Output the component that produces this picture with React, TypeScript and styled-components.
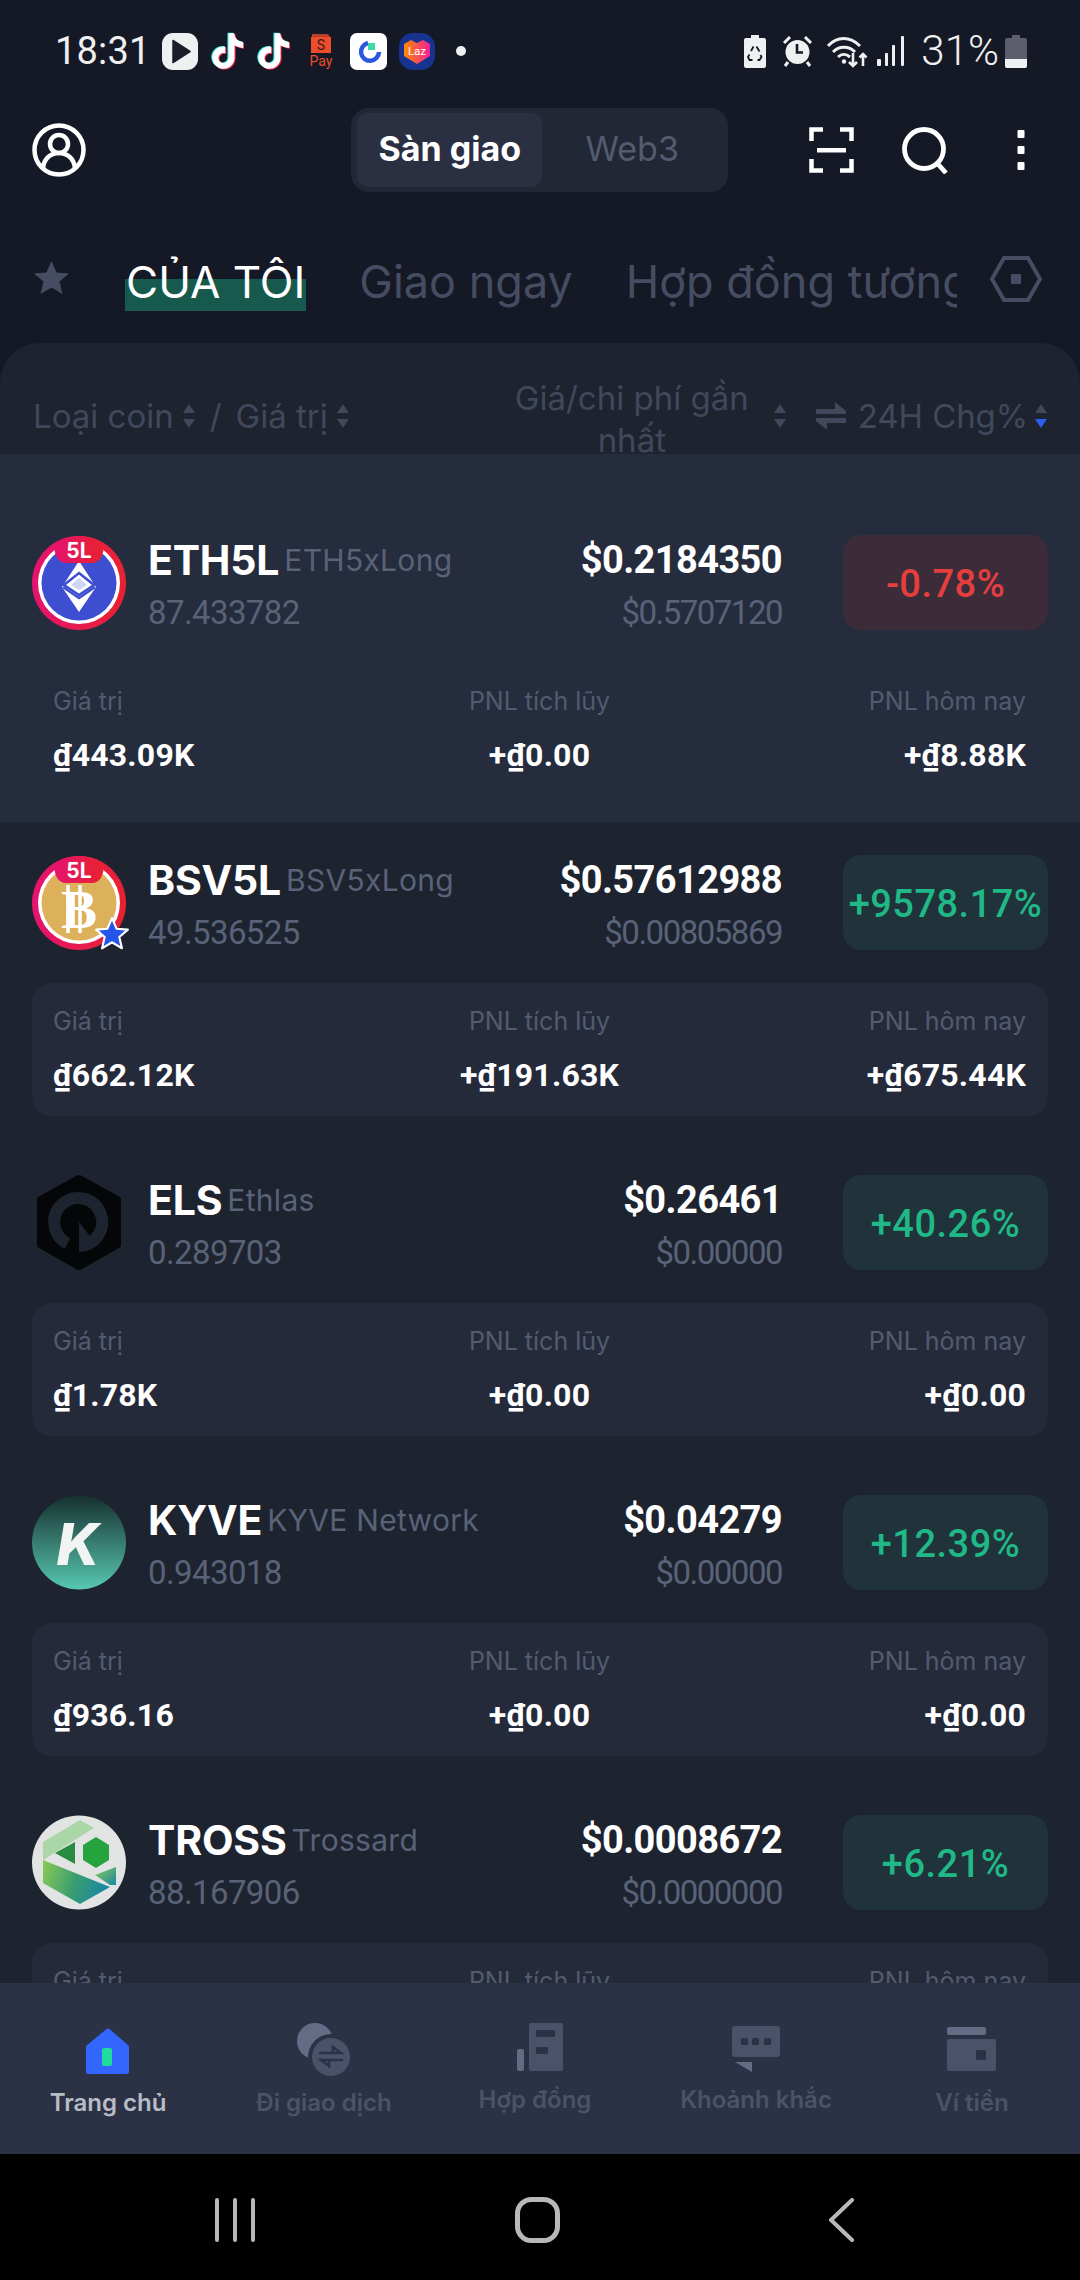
import React from 'react';
import styled, { createGlobalStyle } from 'styled-components';

const Global = createGlobalStyle`
  html, body { margin: 0; padding: 0; background: #151925; }
  * { box-sizing: border-box; }
`;

const Page = styled.div`
  width: 1080px; height: 2280px; display: flex; flex-direction: column; overflow: hidden;
  background: #151925; font-family: Inter, "Noto Sans", sans-serif; color: #fff;
`;
const StatusBar = styled.div`
  height: 100px; flex: none; display: flex; align-items: center; justify-content: space-between;
  padding: 2px 53px 0 55px;
`;
const StatusGroup = styled.div<{ $gap: number }>`display: flex; align-items: center; gap: ${p => p.$gap}px;`;
const Clock = styled.span`
  font: 400 38px/1 Roboto, sans-serif; color: #eef0f2; width: 95px; letter-spacing: .2px;
`;
const Battery = styled.span`
  font: 300 42px/1 Roboto, sans-serif; color: #eef0f2; margin-left: 16px; margin-right: 6px;
`;
const Sys = styled.svg<{ $left?: number }>`display: block; flex: none; margin-left: ${p => p.$left ?? 0}px;`;

const Header = styled.header`
  height: 100px; flex: none; display: grid; grid-template-columns: 319px 377px 1fr; align-items: center; padding-left: 32px;
`;
const Segment = styled.div`
  height: 84px; border-radius: 18px; background: #222736; padding: 5px 6px; display: flex; align-items: stretch;
`;
const SegItem = styled.div<{ $on?: boolean }>`
  width: ${p => (p.$on ? 188 : 182)}px; display: flex; align-items: center; justify-content: center; border-radius: 10px;
  background: ${p => (p.$on ? '#2a2f42' : 'transparent')};
  font-size: 34px; font-weight: ${p => (p.$on ? 700 : 400)}; color: ${p => (p.$on ? '#fff' : '#545b70')};
  padding-bottom: 4px;
`;
const HeaderIcons = styled.div`display: flex; align-items: center; gap: 48px; margin-left: 81px;`;

const TabsRow = styled.nav`
  height: 143px; flex: none; display: flex; align-items: flex-start; padding: 53px 0 0 34px;
`;
const TabClip = styled.div`
  width: 832px; margin-left: 56px; display: flex; gap: 53px; overflow: hidden; white-space: nowrap;
`;
const Tab = styled.span<{ $on?: boolean }>`
  height: 58px; font-size: ${p => (p.$on ? 44 : 45)}px; line-height: 58px; padding: 0 ${p => (p.$on ? 1 : 0)}px; flex: none;
  color: ${p => (p.$on ? '#fff' : '#464d62')};
  background: ${p => (p.$on ? 'linear-gradient(to bottom, transparent 26px, #17594d 26px)' : 'none')};
`;
const HexWrap = styled.div`margin-left: 33px; margin-top: 3px;`;

const Panel = styled.main`
  flex: 1; min-height: 0; overflow: hidden; background: #1e2330; border-radius: 40px 40px 0 0;
`;
const TableHead = styled.div`
  height: 111px; display: flex; align-items: center; padding: 34px 32px 0 33px; overflow: hidden;
  font-size: 33px; color: #41485b;
`;
const HeadGroup = styled.div<{ $auto?: boolean; $gap: number; $end?: number }>`
  display: flex; align-items: center; gap: ${p => p.$gap}px; white-space: nowrap;
  margin-left: ${p => (p.$auto ? 'auto' : 0)}; margin-right: ${p => p.$end ?? 0}px;
`;
const Slash = styled.span`margin: 0 6px;`;
const ChangeHead = styled.span`margin-right: -6px; letter-spacing: -.1px;`;
const TwoLine = styled.div`
  width: 240px; text-align: center; line-height: 42px; white-space: normal; margin-top: 6px; margin-right: 12px;
`;
const Row = styled.section<{ $hi?: boolean }>`
  padding: ${p => (p.$hi ? 81 : 33)}px 32px 26px;
  background: ${p => (p.$hi ? '#252c3d' : 'transparent')};
`;
const RowMain = styled.div`display: flex; align-items: flex-start; height: 95px;`;
const Logo = styled.div`position: relative; width: 94px; height: 95px; flex: none; margin-right: 22px;`;
const Coin = styled.div`flex: 1; min-width: 0;`;
const NameLine = styled.div`display: flex; align-items: center; gap: 5px; height: 50px; line-height: 50px; white-space: nowrap;`;
const Symbol = styled.span`font-size: 41px; font-weight: 700; color: #fff; letter-spacing: -.2px;`;
const FullName = styled.span`font-size: 30px; color: #596277; letter-spacing: .3px;`;
const Amount = styled.div`font: 400 33px/44px Roboto, sans-serif; color: #596277; margin-top: 6px; letter-spacing: -.6px;`;
const Prices = styled.div`text-align: right; width: 300px; flex: none;`;
const Price = styled.div`font: 700 38px/50px Roboto, sans-serif; color: #fff; letter-spacing: -.6px;`;
const Cost = styled.div`font: 400 33px/44px Roboto, sans-serif; color: #596277; margin-top: 6px; letter-spacing: -1.5px;`;
const Change = styled.div<{ $up: boolean }>`
  width: 205px; height: 95px; flex: none; margin-left: 61px; border-radius: 18px; display: flex; align-items: center; justify-content: center;
  font: 500 38px/1 Roboto, sans-serif; letter-spacing: .5px; padding-top: 2px;
  color: ${p => (p.$up ? '#1fb886' : '#e53e3e')};
  background: ${p => (p.$up ? '#20323a' : '#3c2c3a')};
`;
const Stats = styled.div<{ $plain?: boolean }>`
  margin-top: 33px; height: 133px; border-radius: 20px; background: ${p => (p.$plain ? 'transparent' : '#252a3b')}; padding: 20px 22px 0 21px;
  display: grid; grid-template-columns: 1fr 1fr 1fr;
`;
const Stat = styled.div<{ $align: string }>`text-align: ${p => p.$align};`;
const StatLabel = styled.div`font-size: 25px; line-height: 36px; color: #535b70;`;
const StatValue = styled.div`font: 700 32px/40px Roboto, sans-serif; color: #fff; margin-top: 16px; letter-spacing: .2px;`;

const TabBar = styled.nav`
  height: 171px; flex: none; background: #2b3245; padding-top: 40px; display: grid; grid-template-columns: repeat(5, 1fr);
`;
const TabItem = styled.div`display: flex; flex-direction: column; align-items: center;`;
const TabLabel = styled.span<{ $on?: boolean; $lift?: boolean; $nudge?: number }>`
  font-size: 24px; line-height: 32px; font-weight: 600; white-space: nowrap;
  color: ${p => (p.$on ? '#b9bdc7' : '#4b5369')};
  margin-top: ${p => (p.$lift ? 5 : 8)}px;
  margin-right: ${p => p.$nudge ?? 0}px;
`;
const SystemNav = styled.div`
  height: 126px; flex: none; background: #000; display: grid; grid-template-columns: 300px 313px 1fr; align-items: center;
  padding: 5px 0 0 215px;
`;

const Caret = ({ down }: { down?: boolean }) => (
  <svg width="14" height="30" viewBox="0 0 14 30" style={{ display: 'block', flex: 'none' }}>
    <path d="M7 3l6 9H1z" fill="#41485b" />
    <path d="M7 27l6-9H1z" fill={down ? '#2b5ff0' : '#41485b'} />
  </svg>
);

const TIKTOK = 'M12.525.02c1.31-.02 2.61-.01 3.91-.02.08 1.53.63 3.09 1.75 4.17 1.12 1.11 2.7 1.62 4.24 1.79v4.03c-1.44-.05-2.89-.35-4.2-.97-.57-.26-1.1-.59-1.62-.93-.01 2.92.01 5.84-.02 8.75-.08 1.4-.54 2.79-1.35 3.94-1.31 1.92-3.58 3.17-5.91 3.21-1.43.08-2.86-.31-4.08-1.03-2.02-1.19-3.44-3.37-3.65-5.71-.02-.5-.03-1-.01-1.49.18-1.9 1.12-3.72 2.58-4.96 1.66-1.44 3.98-2.13 6.15-1.72.02 1.48-.04 2.96-.04 4.44-.99-.32-2.15-.23-3.02.37-.63.41-1.11 1.04-1.36 1.75-.21.51-.15 1.07-.14 1.61.24 1.64 1.82 3.02 3.5 2.87 1.12-.01 2.19-.66 2.77-1.61.19-.33.4-.67.41-1.06.1-1.79.06-3.57.07-5.36.01-4.03-.01-8.05.02-12.07z';
const TikTok = () => (
  <Sys width="34" height="38" viewBox="0 -.5 23 25">
    <path d={TIKTOK} fill="#25f4ee" transform="translate(-.7 -.4)" />
    <path d={TIKTOK} fill="#fe2c55" transform="translate(.7 .5)" />
    <path d={TIKTOK} fill="#fff" />
  </Sys>
);

const StatusLeft = () => (
  <StatusGroup $gap={12}>
    <Clock>18:31</Clock>
    <Sys width="36" height="37" viewBox="0 0 36 37">
      <rect width="36" height="37" rx="11" fill="#eef0f2" />
      <path d="M11 7.500 28 18.500 11 29.500z" fill="#1a1d2a" stroke="#1a1d2a" strokeWidth="1.500" strokeLinejoin="round" />
    </Sys>
    <TikTok />
    <TikTok />
    <Sys width="36" height="36" viewBox="0 0 36 36">
      <path d="M10 1h16l2 3H10z" fill="#ee4d2d" opacity=".75" />
      <rect x="9" y="4" width="20" height="16" fill="#ee4d2d" />
      <text x="19" y="17" textAnchor="middle" fontFamily="Roboto, sans-serif" fontSize="14" fill="#3b1a16">S</text>
      <text x="19" y="33" textAnchor="middle" fontFamily="Roboto, sans-serif" fontSize="14" fill="#ee4d2d">Pay</text>
    </Sys>
    <Sys width="37" height="37" viewBox="0 0 37 37">
      <rect width="37" height="37" rx="7" fill="#fff" />
      <path d="M18 10a9 9 0 1 0 11 9" fill="none" stroke="#2a56e0" strokeWidth="4.500" />
      <rect x="18" y="10" width="7" height="7" fill="#3ed9a8" />
    </Sys>
    <Sys width="36" height="37" viewBox="0 0 36 37">
      <defs>
        <linearGradient id="lazg" x1="0" y1="0" x2="1" y2="0">
          <stop offset="0" stopColor="#ff8a00" />
          <stop offset="1" stopColor="#f0209a" />
        </linearGradient>
      </defs>
      <rect width="36" height="37" rx="14" fill="#16338f" />
      <path d="M5 11l7-4 6 3 6-3 7 4v12L18 31 5 23z" fill="url(#lazg)" />
      <text x="18" y="22" textAnchor="middle" fontFamily="Roboto, sans-serif" fontSize="11.500" fill="#fff">Laz</text>
    </Sys>
    <Sys width="28" height="10" viewBox="0 0 28 10"><circle cx="14" cy="5" r="5" fill="#eef0f2" /></Sys>
  </StatusGroup>
);

const StatusRight = () => (
  <StatusGroup $gap={0}>
    <Sys width="22" height="33" viewBox="0 0 22 33">
      <path d="M7 0h8v3h5a2 2 0 0 1 2 2v26a2 2 0 0 1-2 2H2a2 2 0 0 1-2-2V5a2 2 0 0 1 2-2h5z" fill="#eef0f2" />
      <path d="M9.500 11.500 7 16M12.500 11.500 15.500 16.500M16.500 20l1 2-2 3h-2M8.500 25H5.500l-1.500-3 1.500-2.500" stroke="#151925" strokeWidth="1.800" fill="none" />
    </Sys>
    <Sys $left={16} width="31" height="32" viewBox="0 0 31 32">
      <circle cx="15.500" cy="17" r="12" fill="#eef0f2" />
      <path d="M15 9v8.500h6" stroke="#151925" strokeWidth="2.600" fill="none" />
      <path d="M2 8l6-6M29 8l-6-6M6 27l-3 4M25 27l3 4" stroke="#eef0f2" strokeWidth="3" />
    </Sys>
    <Sys $left={14} width="41" height="33" viewBox="0 0 41 33">
      <path d="M1 11C10 1 23 1 33 11M6 17c6-6.500 16-6.500 22 0M11 22c3.500-3.500 8-3.500 12 0" stroke="#eef0f2" strokeWidth="3" fill="none" />
      <circle cx="17" cy="26.500" r="2.200" fill="#eef0f2" />
      <path d="M26 18v13M22 27l4 4 4-4M36 31V19M32.500 22.500l3.500-3.500 3.500 3.500" stroke="#eef0f2" strokeWidth="2.600" fill="none" />
    </Sys>
    <Sys $left={9} width="28" height="30" viewBox="0 0 28 30">
      <rect x="0" y="23" width="4" height="7" rx="1" fill="#eef0f2" />
      <rect x="8" y="17" width="3" height="13" rx="1" fill="#eef0f2" />
      <rect x="15" y="9" width="3" height="21" rx="1" fill="#eef0f2" />
      <rect x="24" y="0" width="3" height="30" rx="1" fill="#eef0f2" />
    </Sys>
    <Battery>31%</Battery>
    <Sys width="22" height="33" viewBox="0 0 22 33">
      <path d="M7 0h8v3h5a2 2 0 0 1 2 2v26a2 2 0 0 1-2 2H2a2 2 0 0 1-2-2V5a2 2 0 0 1 2-2h5z" fill="#5c5f6b" />
      <path d="M0 24h22v7a2 2 0 0 1-2 2H2a2 2 0 0 1-2-2z" fill="#eef0f2" />
    </Sys>
  </StatusGroup>
);

const RedRing = ({ id, fill, children }: { id: string; fill: string; children: React.ReactNode }) => (
  <svg width="94" height="95" viewBox="0 0 94 95" style={{ display: 'block' }}>
    <defs>
      <linearGradient id={id} x1="0" y1="0" x2="1" y2="0">
        <stop offset="0" stopColor="#e5136f" />
        <stop offset="1" stopColor="#e8222f" />
      </linearGradient>
    </defs>
    <circle cx="47" cy="48" r="47" fill={`url(#${id})`} />
    <circle cx="47" cy="48" r="41" fill="#fff" />
    <circle cx="47" cy="48" r="37.500" fill={fill} />
    {children}
    <path d="M22 9C30 3 38 1 47 1s17 2 25 8c0 11-4 19-12 19H34C26 28 22 20 22 9z" fill={`url(#${id})`} />
    <text x="47" y="23" textAnchor="middle" fontFamily="Inter, sans-serif" fontWeight="700" fontSize="21" fill="#fff">5L</text>
  </svg>
);

const EthLogo = () => (
  <RedRing id="ethring" fill="#3d4fd0">
    <path d="M47 26 64 52 47 77 30 52z" fill="#fff" />
    <path d="M31 52 47 63 63 52" fill="none" stroke="#3d4fd0" strokeWidth="2.500" />
    <path d="M47 38 62 50 47 60 32 50z" fill="#fff" stroke="#3d4fd0" strokeWidth="2.500" />
    <path d="M47 43 55 50 47 55 39 50z" fill="#cfd5f5" />
  </RedRing>
);
const BsvLogo = () => (
  <RedRing id="bsvring" fill="#ddb05c">
    <path d="M36 30v48M48 30v48" stroke="#fff" strokeWidth="3.500" />
    <text x="47" y="73" textAnchor="middle" fontFamily="Liberation Serif, serif" fontWeight="700" fontSize="54" fill="#fff">B</text>
  </RedRing>
);
const StarBadge = styled.svg`position: absolute; left: 62px; top: 61px; display: block;`;
const ElsLogo = () => (
  <svg width="94" height="95" viewBox="0 0 94 95" style={{ display: 'block' }}>
    <path d="M47 0a4 4 0 0 1 2 .5L87 21.500a3 3 0 0 1 2 3V70a3 3 0 0 1-2 3L49 94.500a4 4 0 0 1-4 0L7 73a3 3 0 0 1-2-3V24.500a3 3 0 0 1 2-3L45 .5a4 4 0 0 1 2-.5z" fill="#050608" />
    <path d="M35.500 68.500A24 24 0 1 1 47 71" fill="none" stroke="#1e2330" strokeWidth="12" />
    <path d="M47 77V47L60 64 53 76z" fill="#1e2330" />
  </svg>
);
const KyveLogo = () => (
  <svg width="94" height="95" viewBox="0 0 94 95" style={{ display: 'block' }}>
    <defs>
      <linearGradient id="kyveg" x1="0" y1="0" x2="0" y2="1">
        <stop offset="0" stopColor="#16302f" />
        <stop offset="1" stopColor="#58c8b0" />
      </linearGradient>
    </defs>
    <circle cx="47" cy="47.500" r="47" fill="url(#kyveg)" />
    <text x="46" y="70" textAnchor="middle" fontFamily="Inter, sans-serif" fontWeight="800" fontStyle="italic" fontSize="58" fill="#f2f4f3">K</text>
  </svg>
);
const TrossLogo = () => (
  <svg width="94" height="95" viewBox="0 0 94 95" style={{ display: 'block' }}>
    <defs>
      <linearGradient id="trossg" x1="0" y1="0" x2="1" y2=".2">
        <stop offset="0" stopColor="#8ccb56" />
        <stop offset=".55" stopColor="#3a9d6f" />
        <stop offset="1" stopColor="#1a88a0" />
      </linearGradient>
      <linearGradient id="trossb" x1="0" y1="0" x2="1" y2="1">
        <stop offset="0" stopColor="#8ccb56" />
        <stop offset="1" stopColor="#1a88a0" />
      </linearGradient>
    </defs>
    <circle cx="47" cy="47.500" r="47" fill="#e2e4e4" />
    <path d="M48 5 62 13 11 45V27z" fill="#abd6a8" />
    <path d="M43 27V49L23 38z" fill="#2b8a41" />
    <path d="M11 45 78 72 48 89 11 68z" fill="url(#trossg)" />
    <path d="M84 52V70H78L63 60z" fill="url(#trossb)" />
    <path d="M64 22 77 30V45L64 53 51 45V30z" fill="#25a33f" />
  </svg>
);

const NavSvg = styled.svg`display: block;`;
const HomeIcon = () => (
  <NavSvg width="46" height="56" viewBox="0 0 46 56">
    <path d="M21 6.500a3 3 0 0 1 4 0L44 23v26a2 2 0 0 1-2 2H3a2 2 0 0 1-2-2V23z" fill="#3366ff" />
    <rect x="17" y="25" width="10" height="18" rx="2" fill="#1fdc9c" />
  </NavSvg>
);
const TradeIcon = () => (
  <NavSvg width="54" height="56" viewBox="0 0 54 56">
    <circle cx="18" cy="18" r="18" fill="#646c85" />
    <circle cx="34" cy="34" r="23" fill="#2b3245" />
    <circle cx="34" cy="34" r="19" fill="#4a526a" />
    <path d="M22 30h22l-8-6v6M46 37H24l8 6v-6" stroke="#2b3245" strokeWidth="2.500" fill="none" />
  </NavSvg>
);
const ContractIcon = () => (
  <NavSvg width="46" height="56" viewBox="0 0 46 56">
    <rect x="12" width="34" height="48" rx="2" fill="#4a526a" />
    <rect y="26" width="7" height="22" rx="2" fill="#646c85" />
    <rect x="19" y="7" width="19" height="7" rx="1.500" fill="#2b3245" />
    <rect x="19" y="24" width="12" height="7" rx="1.500" fill="#2b3245" />
  </NavSvg>
);
const MomentIcon = () => (
  <NavSvg width="48" height="56" viewBox="0 0 48 56">
    <rect y="3" width="48" height="31" rx="3" fill="#4a526a" />
    <rect x="9" y="15" width="7" height="7" rx="1.500" fill="#2b3245" />
    <rect x="20" y="15" width="7" height="7" rx="1.500" fill="#2b3245" />
    <rect x="32" y="15" width="7" height="7" rx="1.500" fill="#2b3245" />
    <path d="M3 39H20V49z" fill="#646c85" />
  </NavSvg>
);
const WalletIcon = () => (
  <NavSvg width="50" height="56" viewBox="0 0 50 56">
    <rect y="4" width="39" height="8" rx="2" fill="#646c85" />
    <rect y="16" width="49" height="32" rx="2" fill="#4a526a" />
    <rect x="29" y="27" width="10" height="10" rx="1.500" fill="#2b3245" />
  </NavSvg>
);

type CoinRow = {
  sym: string; full: string; amount: string; price: string; cost: string; change: string; up: boolean;
  logo: React.ReactNode; star?: boolean; stats: [string, string, string];
};
const coins: CoinRow[] = [
  { sym: 'ETH5L', full: 'ETH5xLong', amount: '87.433782', price: '$0.2184350', cost: '$0.5707120', change: '-0.78%', up: false, logo: <EthLogo />, stats: ['₫443.09K', '+₫0.00', '+₫8.88K'] },
  { sym: 'BSV5L', full: 'BSV5xLong', amount: '49.536525', price: '$0.57612988', cost: '$0.00805869', change: '+9578.17%', up: true, logo: <BsvLogo />, star: true, stats: ['₫662.12K', '+₫191.63K', '+₫675.44K'] },
  { sym: 'ELS', full: 'Ethlas', amount: '0.289703', price: '$0.26461', cost: '$0.00000', change: '+40.26%', up: true, logo: <ElsLogo />, stats: ['₫1.78K', '+₫0.00', '+₫0.00'] },
  { sym: 'KYVE', full: 'KYVE Network', amount: '0.943018', price: '$0.04279', cost: '$0.00000', change: '+12.39%', up: true, logo: <KyveLogo />, stats: ['₫936.16', '+₫0.00', '+₫0.00'] },
  { sym: 'TROSS', full: 'Trossard', amount: '88.167906', price: '$0.0008672', cost: '$0.0000000', change: '+6.21%', up: true, logo: <TrossLogo />, stats: ['', '', ''] },
];

export default function App() {
  return (
    <Page>
      <Global />
      <StatusBar>
        <StatusLeft />
        <StatusRight />
      </StatusBar>
      <Header>
        <svg width="54" height="54" viewBox="0 0 54 54" style={{ display: 'block' }}>
          <circle cx="27" cy="27" r="24.500" fill="none" stroke="#fff" strokeWidth="4.500" />
          <circle cx="27" cy="21" r="9" fill="none" stroke="#fff" strokeWidth="4.500" />
          <path d="M11 45c1-9 7-15 16-15s15 6 16 15" fill="none" stroke="#fff" strokeWidth="4.500" />
        </svg>
        <Segment>
          <SegItem $on>Sàn giao</SegItem>
          <SegItem>Web3</SegItem>
        </Segment>
        <HeaderIcons>
          <svg width="45" height="46" viewBox="0 0 45 46" style={{ display: 'block' }}>
            <path d="M14 2.500H2.500V14M31 2.500h11.500V14M14 43.500H2.500V32M31 43.500h11.500V32" fill="none" stroke="#fff" strokeWidth="4.500" />
            <rect x="8" y="21" width="29" height="4.500" fill="#fff" />
          </svg>
          <svg width="48" height="47" viewBox="0 0 48 47" style={{ display: 'block' }}>
            <circle cx="22" cy="22" r="19.500" fill="none" stroke="#fff" strokeWidth="4.800" />
            <path d="M35 36l9 10" stroke="#fff" strokeWidth="4.800" />
          </svg>
          <svg width="46" height="40" viewBox="0 0 46 40" style={{ display: 'block' }}>
            <rect x="19.500" y="0" width="7" height="8" rx="1" fill="#fff" />
            <rect x="19.500" y="16" width="7" height="8" rx="1" fill="#fff" />
            <rect x="19.500" y="32" width="7" height="8" rx="1" fill="#fff" />
          </svg>
        </HeaderIcons>
      </Header>
      <TabsRow>
        <svg width="35" height="33" viewBox="0 0 35 33" style={{ display: 'block', flex: 'none', marginTop: 8 }}>
          <path d="M17.500 0l5 11.500 12.500 1-9.500 8 3 12.500-11-6.600L6.500 33l3-12.500-9.500-8 12.500-1z" fill="#464d62" />
        </svg>
        <TabClip>
          <Tab $on>CỦA TÔI</Tab>
          <Tab>Giao ngay</Tab>
          <Tab>Hợp đồng tương lai</Tab>
        </TabClip>
        <HexWrap>
          <svg width="52" height="46" viewBox="0 0 52 46" style={{ display: 'block' }}>
            <path d="M14 2h24l12 21-12 21H14L2 23z" fill="none" stroke="#464d62" strokeWidth="4" />
            <rect x="21" y="18" width="10" height="10" fill="#464d62" />
          </svg>
        </HexWrap>
      </TabsRow>
      <Panel>
        <TableHead>
          <HeadGroup $gap={8}>
            <span>Loại coin</span><Caret />
            <Slash>/</Slash>
            <span>Giá trị</span><Caret />
          </HeadGroup>
          <HeadGroup $auto $gap={9} $end={29}>
            <TwoLine>Giá/chi phí gần nhất</TwoLine>
            <Caret />
          </HeadGroup>
          <HeadGroup $gap={12}>
            <svg width="30" height="32" viewBox="0 0 30 32" style={{ display: 'block' }}>
              <path d="M0 9h19V2l11 9v3H0zM30 23H11v7L0 21v-3h30z" fill="#41485b" />
            </svg>
            <ChangeHead>24H Chg%</ChangeHead>
            <Caret down />
          </HeadGroup>
        </TableHead>
        {coins.map((c, i) => (
          <Row key={c.sym} $hi={i === 0}>
            <RowMain>
              <Logo>
                {c.logo}
                {c.star && (
                  <StarBadge width="36" height="36" viewBox="0 0 34 34">
                    <path d="M17 2l4.300 10 10.700.9-8.100 7 2.500 10.600L17 24.800 7.600 30.500l2.500-10.600-8.100-7 10.700-.9z" fill="#2356e6" stroke="#fff" strokeWidth="2" strokeLinejoin="round" />
                  </StarBadge>
                )}
              </Logo>
              <Coin>
                <NameLine>
                  <Symbol>{c.sym}</Symbol>
                  <FullName>{c.full}</FullName>
                </NameLine>
                <Amount>{c.amount}</Amount>
              </Coin>
              <Prices>
                <Price>{c.price}</Price>
                <Cost>{c.cost}</Cost>
              </Prices>
              <Change $up={c.up}>{c.change}</Change>
            </RowMain>
            <Stats $plain={i === 0}>
              <Stat $align="left">
                <StatLabel>Giá trị</StatLabel>
                <StatValue>{c.stats[0]}</StatValue>
              </Stat>
              <Stat $align="center">
                <StatLabel>PNL tích lũy</StatLabel>
                <StatValue>{c.stats[1]}</StatValue>
              </Stat>
              <Stat $align="right">
                <StatLabel>PNL hôm nay</StatLabel>
                <StatValue>{c.stats[2]}</StatValue>
              </Stat>
            </Stats>
          </Row>
        ))}
      </Panel>
      <TabBar>
        <TabItem><HomeIcon /><TabLabel $on>Trang chủ</TabLabel></TabItem>
        <TabItem><TradeIcon /><TabLabel>Đi giao dịch</TabLabel></TabItem>
        <TabItem><ContractIcon /><TabLabel $lift $nudge={10}>Hợp đồng</TabLabel></TabItem>
        <TabItem><MomentIcon /><TabLabel $lift>Khoảnh khắc</TabLabel></TabItem>
        <TabItem><WalletIcon /><TabLabel>Ví tiền</TabLabel></TabItem>
      </TabBar>
      <SystemNav>
        <svg width="40" height="44" viewBox="0 0 40 44" style={{ display: 'block' }}>
          <path d="M2 2v40M20 2v40M38 2v40" stroke="#b8b8b8" strokeWidth="4" strokeLinecap="round" />
        </svg>
        <svg width="45" height="46" viewBox="0 0 45 46" style={{ display: 'block' }}>
          <rect x="2.500" y="2.500" width="40" height="41" rx="14" fill="none" stroke="#b8b8b8" strokeWidth="5" />
        </svg>
        <svg width="26" height="44" viewBox="0 0 26 44" style={{ display: 'block' }}>
          <path d="M24 2 3 22l21 20" fill="none" stroke="#b8b8b8" strokeWidth="4" strokeLinecap="round" strokeLinejoin="round" />
        </svg>
      </SystemNav>
    </Page>
  );
}
